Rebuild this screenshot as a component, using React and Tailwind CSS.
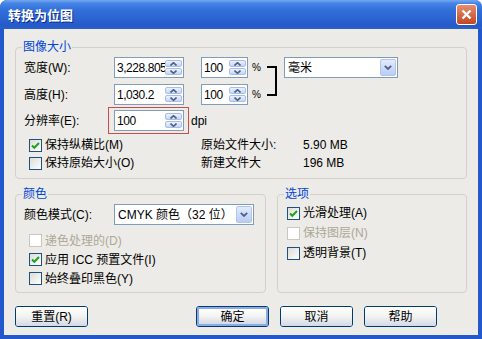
import React from "react";

function Spinner() {
  return (
    <div className="flex flex-col w-[17px] h-[15px] gap-[1px] mr-[1px] shrink-0">
      <div className="flex-1 flex items-center justify-center rounded-[2px] border border-[#a9bde6] bg-linear-to-b from-[#edf2ff] to-[#c6d5f5]">
        <svg width="7" height="4" viewBox="0 0 7 4">
          <path d="M0.5 3.5 L3.5 0.7 L6.5 3.5" stroke="#4d6185" strokeWidth="1.6" fill="none" />
        </svg>
      </div>
      <div className="flex-1 flex items-center justify-center rounded-[2px] border border-[#a9bde6] bg-linear-to-b from-[#edf2ff] to-[#c6d5f5]">
        <svg width="7" height="4" viewBox="0 0 7 4">
          <path d="M0.5 0.5 L3.5 3.3 L6.5 0.5" stroke="#4d6185" strokeWidth="1.6" fill="none" />
        </svg>
      </div>
    </div>
  );
}

function SpinInput({ value, wide }) {
  return (
    <div
      className={
        "flex items-center h-[21px] border border-[#7f9db9] bg-white " +
        (wide ? "w-[70px]" : "w-[47px]")
      }
    >
      <span className="flex-1 overflow-hidden whitespace-nowrap pl-[2px] tracking-[-0.45px]">{value}</span>
      <Spinner />
    </div>
  );
}

function Dropdown({ text, wide }) {
  return (
    <div
      className={
        "flex items-center h-[21px] border border-[#7f9db9] bg-white " +
        (wide ? "w-[140px]" : "w-[114px]")
      }
    >
      <span className="flex-1 overflow-hidden whitespace-nowrap pl-[3px]">{text}</span>
      <div className="w-[16px] h-[17px] mr-[1px] rounded-[2px] border border-[#b3c6ee] bg-linear-to-b from-[#e3ebfd] to-[#b9ccf4] flex items-center justify-center shrink-0">
        <svg width="8" height="5" viewBox="0 0 8 5">
          <path d="M0.8 0.8 L4 4 L7.2 0.8" stroke="#4d6185" strokeWidth="1.8" fill="none" />
        </svg>
      </div>
    </div>
  );
}

function Check({ checked, disabled, label, rowClass }) {
  return (
    <div className={"flex items-center gap-[3px] " + rowClass}>
      <div
        className={
          "w-[13px] h-[13px] border flex items-center justify-center shrink-0 " +
          (disabled
            ? "border-[#cac8bb] bg-white"
            : "border-[#1c5180] bg-linear-to-br from-[#dcdcd7] to-white")
        }
      >
        {checked && (
          <svg width="11" height="11" viewBox="0 0 11 11">
            <path d="M2 5.5 L4.3 7.8 L9 3" stroke="#21a121" strokeWidth="2" fill="none" />
          </svg>
        )}
      </div>
      <span className={disabled ? "text-[#aca899]" : ""}>{label}</span>
    </div>
  );
}

function Btn({ children, isDefault, extra }) {
  return (
    <div
      className={
        "w-[73px] h-[21px] rounded-[3px] border border-[#003c74] flex items-center justify-center " +
        extra
      }
    >
      <div
        className={
          "w-full h-full rounded-[2px] flex items-center justify-center bg-linear-to-b from-white via-[#f2f2f0] to-[#d3d9e6] " +
          (isDefault ? "border-2 border-[#8cabe6]" : "")
        }
      >
        {children}
      </div>
    </div>
  );
}

function SizeRow({ label, value }) {
  return (
    <div className="flex items-center">
      <span className="w-[90px]">{label}</span>
      <SpinInput value={value} wide />
      <div className="ml-[17px]">
        <SpinInput value="100" />
      </div>
      <span className="ml-[4px] w-[8px] text-[10px]">%</span>
    </div>
  );
}

export default function App() {
  return (
    <div className="w-[482px] h-[339px] bg-white font-['Liberation_Sans','Noto_Sans_CJK_SC',sans-serif] text-[12px] leading-[14px] text-black">
      <div className="flex flex-col w-full h-full rounded-t-[7px] overflow-hidden bg-[#2358cc]">
        {/* Title bar */}
        <div className="h-[29px] shrink-0 flex items-center pl-[8px] pr-[5px] bg-[linear-gradient(#75a7ee_0%,#4584e6_12%,#326fda_35%,#2c66d3_60%,#2459c8_88%,#2b60cd_100%)]">
          <span className="text-white font-bold text-[13px] leading-[16px] font-['Noto_Sans_CJK_SC',sans-serif] [text-shadow:1px_1px_0_#0b2d86]">
            转换为位图
          </span>
          <div className="ml-auto w-[21px] h-[21px] rounded-[3px] border border-white bg-linear-to-b from-[#e58d70] to-[#c2461f] flex items-center justify-center">
            <svg width="13" height="13" viewBox="0 0 13 13">
              <path d="M2.5 2.5 L10.5 10.5 M10.5 2.5 L2.5 10.5" stroke="white" strokeWidth="2.4" />
            </svg>
          </div>
        </div>

        {/* Body */}
        <div className="flex-1 mx-[4px] mb-[4px] bg-[#ecebe7] flex flex-col pt-[18px] px-[11px] pb-[8px]">
          {/* Group 1 */}
          <div className="relative h-[132px] border border-[#d3d1c8] rounded-[4px] pt-[9px] pl-[8px]">
            <span className="absolute -top-[8px] left-[6px] px-[1px] bg-[#ecebe7] text-[#0046d5]">
              图像大小
            </span>
            <div className="flex items-start">
              <div className="flex flex-col gap-[6px]">
                <SizeRow label="宽度(W):" value="3,228.805" />
                <SizeRow label="高度(H):" value="1,030.2" />
              </div>
              <div className="mt-[9px] ml-[7px] w-[10px] h-[30px] border-y-2 border-r-2 border-black" />
              <div className="ml-[7px]">
                <Dropdown text="毫米" />
              </div>
            </div>
            <div className="flex items-center mt-[2px]">
              <span className="w-[90px]">分辨率(E):</span>
              <div className="-ml-[6px] border border-[#cf4a4a] pl-[5px] pr-[4px] py-[2px]">
                <SpinInput value="100" wide />
              </div>
              <span className="ml-[2px]">dpi</span>
            </div>
            <div className="grid grid-cols-[172px_102px_auto] mt-[2px] ml-[5px]">
              <Check checked label="保持纵横比(M)" rowClass="h-[18px]" />
              <div className="h-[18px] flex items-center">原始文件大小:</div>
              <div className="h-[18px] flex items-center">5.90 MB</div>
              <Check label="保持原始大小(O)" rowClass="h-[18px]" />
              <div className="h-[18px] flex items-center">新建文件大</div>
              <div className="h-[18px] flex items-center">196 MB</div>
            </div>
          </div>

          {/* Groups 2 & 3 */}
          <div className="flex gap-[11px] mt-[15px] h-[99px]">
            <div className="relative w-[251px] border border-[#d3d1c8] rounded-[4px] pt-[9px] pl-[8px]">
              <span className="absolute -top-[8px] left-[6px] px-[1px] bg-[#ecebe7] text-[#0046d5]">
                颜色
              </span>
              <div className="flex items-center">
                <span className="w-[90px]">颜色模式(C):</span>
                <Dropdown text="CMYK 颜色（32 位）" wide />
              </div>
              <div className="flex flex-col mt-[6px] ml-[5px]">
                <Check disabled label="递色处理的(D)" rowClass="h-[19px]" />
                <Check checked label="应用 ICC 预置文件(I)" rowClass="h-[19px]" />
                <Check label="始终叠印黑色(Y)" rowClass="h-[19px]" />
              </div>
            </div>
            <div className="relative flex-1 border border-[#d3d1c8] rounded-[4px] pt-[8px] pl-[9px]">
              <span className="absolute -top-[8px] left-[6px] px-[1px] bg-[#ecebe7] text-[#0046d5]">
                选项
              </span>
              <div className="flex flex-col">
                <Check checked label="光滑处理(A)" rowClass="h-[20px]" />
                <Check disabled label="保持图层(N)" rowClass="h-[20px]" />
                <Check label="透明背景(T)" rowClass="h-[20px]" />
              </div>
            </div>
          </div>

          {/* Buttons */}
          <div className="flex mt-[13px]">
            <Btn extra="">重置(R)</Btn>
            <Btn isDefault extra="ml-[108px]">确定</Btn>
            <Btn extra="ml-[11px]">取消</Btn>
            <Btn extra="ml-[11px]">帮助</Btn>
          </div>
        </div>
      </div>
    </div>
  );
}
